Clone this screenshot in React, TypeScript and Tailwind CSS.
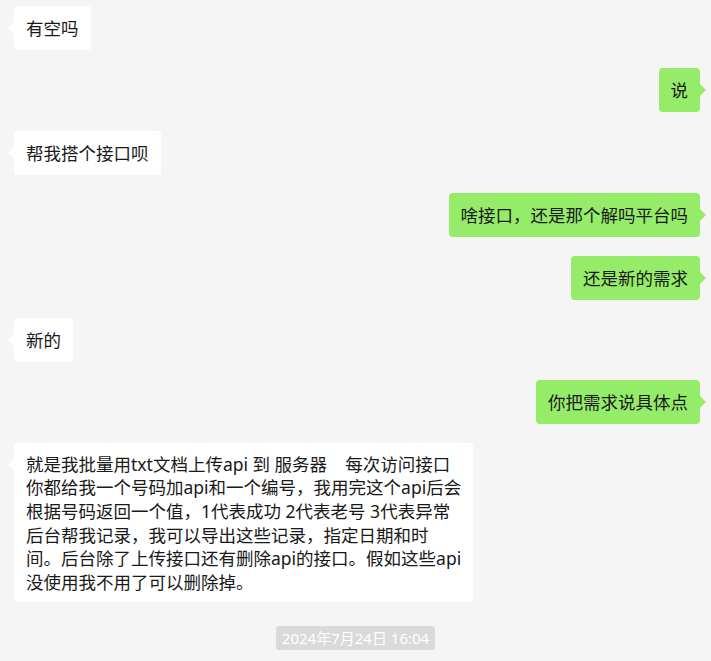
import React from 'react';

type Msg = { side: 'left' | 'right'; lines: string[] };

const messages: Msg[] = [
  { side: 'left', lines: ['有空吗'] },
  { side: 'right', lines: ['说'] },
  { side: 'left', lines: ['帮我搭个接口呗'] },
  { side: 'right', lines: ['啥接口，还是那个解吗平台吗'] },
  { side: 'right', lines: ['还是新的需求'] },
  { side: 'left', lines: ['新的'] },
  { side: 'right', lines: ['你把需求说具体点'] },
  {
    side: 'left',
    lines: [
      '就是我批量用txt文档上传api 到 服务器    每次访问接口',
      '你都给我一个号码加api和一个编号，我用完这个api后会',
      '根据号码返回一个值，1代表成功 2代表老号 3代表异常',
      '后台帮我记录，我可以导出这些记录，指定日期和时',
      '间。后台除了上传接口还有删除api的接口。假如这些api',
      '没使用我不用了可以删除掉。',
    ],
  },
];

const Bubble = ({ msg }: { msg: Msg }) => {
  const isLeft = msg.side === 'left';
  const multi = msg.lines.length > 1;
  return (
    <div className={isLeft ? 'flex justify-start pl-[14px]' : 'flex justify-end pr-[11px]'}>
      <div
        className={
          (isLeft ? 'relative rounded-[4px] bg-white px-[12px]' : 'relative rounded-[4px] bg-[#95ec69] px-[12px]') +
          (multi ? ' pb-[8px] pt-[10px]' : ' py-[10px]')
        }
      >
        {isLeft ? (
          <span className="absolute left-[-6px] top-[16px] h-0 w-0 border-y-[6px] border-r-[6px] border-y-transparent border-r-white" />
        ) : (
          <span className="absolute right-[-6px] top-[16px] h-0 w-0 border-y-[6px] border-l-[6px] border-y-transparent border-l-[#95ec69]" />
        )}
        <div
          className={
            multi
              ? 'whitespace-pre text-[17.5px] leading-[23.6px] text-[#191919]'
              : 'whitespace-pre text-[17.5px] leading-[24px] text-[#191919]'
          }
        >
          {msg.lines.map((l, i) => (
            <div key={i}>{l}</div>
          ))}
        </div>
      </div>
    </div>
  );
};

export default function App() {
  return (
    <div
      className="min-h-[661px] w-full bg-[#f5f5f5] pt-[6px]"
      style={{ fontFamily: '"Noto Sans", "Noto Sans CJK SC", sans-serif' }}
    >
      <div className="flex flex-col gap-[18.4px]">
        {messages.map((m, i) => (
          <Bubble key={i} msg={m} />
        ))}
      </div>
      <div className="mt-[24px] flex justify-center">
        <span className="rounded-[3px] bg-[#dadada] px-[6px] text-[15px] leading-[24px] text-white">
          2024年7月24日 16:04
        </span>
      </div>
    </div>
  );
}
